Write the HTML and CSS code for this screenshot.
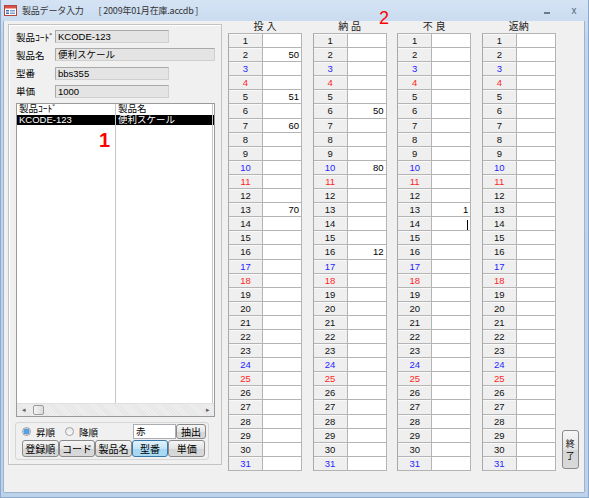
FILE: index.html
```html
<!DOCTYPE html>
<html lang="ja">
<head>
  <meta charset="UTF-8" />
  <title>製品データ入力</title>
  <link rel="stylesheet" href="styles.css">
</head>
<body>

  <div class="window">
    <!-- title bar -->
    <div class="titlebar">
      <svg class="app-icon" width="13" height="11" viewBox="0 0 13 11">
        <rect x="0.5" y="0.5" width="12" height="10" fill="#fff" stroke="#b4443c"/>
        <rect x="1" y="1" width="11" height="2.5" fill="#d9534a"/>
        <rect x="2" y="5" width="3" height="1.5" fill="#3d6fb8"/>
        <rect x="6" y="5" width="5" height="1.5" fill="#7aa0d4"/>
        <rect x="2" y="7.5" width="3" height="1.5" fill="#3d6fb8"/>
        <rect x="6" y="7.5" width="5" height="1.5" fill="#7aa0d4"/>
      </svg>
      <span class="title">製品データ入力</span>
      <span class="title file">[ 2009年01月在庫.accdb ]</span>
      <span class="win-btn min"></span>
      <span class="win-btn close">x</span>
    </div>

    <div class="client">
      <!-- left panel -->
      <div class="panel">
        <div class="field">
          <span class="field-label">製品ｺｰﾄﾞ</span>
          <div class="field-box">KCODE-123</div>
        </div>
        <div class="field">
          <span class="field-label">製品名</span>
          <div class="field-box wide">便利スケール</div>
        </div>
        <div class="field">
          <span class="field-label">型番</span>
          <div class="field-box">bbs355</div>
        </div>
        <div class="field">
          <span class="field-label">単価</span>
          <div class="field-box">1000</div>
        </div>

        <div class="listbox">
          <div class="list-cols">
            <div class="list-col c1">
              <div class="list-cell">製品ｺｰﾄﾞ</div>
              <div class="list-cell sel">KCODE-123</div>
            </div>
            <div class="list-col c2">
              <div class="list-cell">製品名</div>
              <div class="list-cell sel">便利スケール</div>
            </div>
            <div class="list-col c3">
              <div class="list-cell"></div>
              <div class="list-cell sel"></div>
            </div>
          </div>
          <div class="hscroll">
            <span class="arrow">◂</span>
            <span class="thumb"></span>
            <span class="arrow right">▸</span>
          </div>
          <span class="mark mark-1">1</span>
        </div>

        <div class="sort-box">
          <div class="sort-row">
            <span class="radio checked"></span><span class="radio-label">昇順</span>
            <span class="radio"></span><span class="radio-label">降順</span>
            <div class="filter-box">赤</div>
            <button class="btn filter-btn">抽出</button>
          </div>
          <div class="sort-buttons">
            <button class="btn">登録順</button>
            <button class="btn">コード</button>
            <button class="btn">製品名</button>
            <button class="btn pressed">型番</button>
            <button class="btn">単価</button>
          </div>
        </div>
      </div>

      <!-- daily sheets -->
      <div class="sheets">
        <div class="sheet">
          <div class="sheet-head">投&nbsp;入</div>
          <div class="grid" data-values="2:50,5:51,7:60,13:70"></div>
        </div>
        <div class="sheet">
          <div class="sheet-head">納&nbsp;品</div>
          <div class="grid" data-values="6:50,10:80,16:12"></div>
        </div>
        <div class="sheet">
          <div class="sheet-head">不&nbsp;良</div>
          <div class="grid" data-values="13:1,14:|"></div>
        </div>
        <div class="sheet">
          <div class="sheet-head">返納</div>
          <div class="grid" data-values=""></div>
        </div>
      </div>

      <button class="btn end-btn"><span>終</span><span>了</span></button>
    </div>

    <span class="mark mark-2">2</span>
  </div>

  <script>
    const blueDays = [3, 10, 17, 24, 31];
    const redDays = [4, 11, 18, 25];

    document.querySelectorAll('.grid').forEach(grid => {
      const values = {};
      grid.dataset.values.split(',').filter(Boolean).forEach(pair => {
        const [day, v] = pair.split(':');
        values[day] = v;
      });

      for (let d = 1; d <= 31; d++) {
        const row = document.createElement('div');
        row.className = 'row';

        const num = document.createElement('div');
        num.className = 'num';
        if (blueDays.includes(d)) num.classList.add('blue');
        if (redDays.includes(d)) num.classList.add('red');
        num.textContent = d;

        const val = document.createElement('div');
        val.className = 'val';
        if (values[d] === '|') {
          val.innerHTML = '<span class="caret"></span>';
        } else if (values[d]) {
          val.textContent = values[d];
        }

        row.appendChild(num);
        row.appendChild(val);
        grid.appendChild(row);
      }
    });
  </script>

</body>
</html>
```

FILE: styles.css
```css
body {
  margin: 0;
  background: #fff;
  font-family: "Liberation Sans", "Noto Sans CJK JP", sans-serif;
  font-size: 9.5px;
  color: #000;
}

.window {
  position: relative;
  width: 589px;
  height: 498px;
  box-sizing: border-box;
  display: flex;
  flex-direction: column;
  border: 1px solid #8ea9cb;
  border-top: none;
  background: linear-gradient(#d5e3f4, #c1d5ed 40px, #bcd1ea);
}

/* title bar */
.titlebar {
  height: 21px;
  flex: none;
  display: flex;
  align-items: center;
  padding-left: 3px;
}

.app-icon {
  flex: none;
  margin-right: 5px;
  margin-top: -1px;
}

.title {
  font-family: "Noto Sans CJK JP", sans-serif;
  font-size: 9px;
  color: #333;
  letter-spacing: -0.2px;
}

.title.file {
  margin-left: 15px;
}

.win-btn {
  width: 14px;
  text-align: center;
  font-size: 10px;
  color: #55657a;
}

.win-btn.min {
  margin-left: auto;
  height: 14px;
  display: flex;
  align-items: center;
  justify-content: center;
}

.win-btn.min::before {
  content: "";
  width: 6px;
  height: 2px;
  margin-top: 4px;
  background: #6a7a90;
}

.win-btn.close {
  margin-left: 13px;
  margin-right: 7px;
}

/* client area */
.client {
  flex: 1;
  margin: 0 4px 5px 3px;
  background: #f0f0f0;
  box-shadow: -1px 0 #9cb2cd, 1px 0 #9cb2cd, 0 1px #9cb2cd;
  display: flex;
  align-items: flex-start;
  padding: 3px 0 0 4px;
}

.panel {
  flex: none;
  width: 214px;
  height: 441px;
  box-sizing: border-box;
  border: 1px solid #c3c3c3;
  box-shadow: inset 1px 1px #fff;
  padding: 5px 0 0 7px;
}

.field {
  display: flex;
  align-items: center;
  height: 13px;
  margin-bottom: 5.3px;
}

.field-label {
  width: 39px;
  flex: none;
  font-family: "Noto Sans CJK JP", sans-serif;
}

.field-box {
  width: 114px;
  height: 13px;
  box-sizing: border-box;
  background: #e4e4e4;
  border: 1px solid #a9a9a9;
  border-right-color: #cfcfcf;
  border-bottom-color: #cfcfcf;
  padding-left: 2px;
  line-height: 11px;
}

.field-box.wide {
  width: 160px;
}

/* list */
.listbox {
  position: relative;
  width: 199px;
  height: 314px;
  box-sizing: border-box;
  margin-top: 5px;
  background: #fff;
  border: 1px solid #9a9a9a;
  display: flex;
  flex-direction: column;
}

.list-cols {
  flex: 1;
  display: flex;
}

.list-col {
  border-right: 1px solid #c6c6c6;
}

.list-col.c1 { width: 98px; }
.list-col.c2 { width: 96px; }
.list-col.c3 { width: 1px; border-right: none; }

.list-cell {
  height: 10.5px;
  line-height: 10px;
  padding-left: 2px;
  white-space: nowrap;
  overflow: hidden;
}

.list-cell.sel {
  background: #000;
  color: #fff;
}

.list-col.c3 .list-cell {
  padding-left: 0;
}

.hscroll {
  height: 12px;
  flex: none;
  display: flex;
  align-items: center;
  background: repeating-linear-gradient(45deg, #efefef 0 1px, #e6e6e6 1px 2px);
  border-top: 1px solid #e0e0e0;
  font-size: 7px;
  color: #606060;
}

.arrow {
  width: 13px;
  text-align: center;
}

.arrow.right {
  margin-left: auto;
}

.thumb {
  width: 11px;
  height: 10px;
  box-sizing: border-box;
  margin-left: 3px;
  border: 1px solid #9b9b9b;
  border-radius: 2px;
  background: linear-gradient(90deg, #f4f4f4, #dcdcdc);
}

/* sort box */
.sort-box {
  width: 194px;
  box-sizing: border-box;
  margin: 5px 0 0 -1px;
  border: 1px solid #d6d6d6;
  border-radius: 3px;
  padding: 1px 2px 2px 6px;
}

.sort-row {
  height: 15px;
  display: flex;
  align-items: center;
}

.radio {
  width: 9px;
  height: 9px;
  box-sizing: border-box;
  border: 1px solid #9ba0a6;
  border-radius: 50%;
  background: linear-gradient(#e8e8e8, #fafafa);
  margin-right: 5px;
}

.radio.checked {
  background: radial-gradient(circle, #4fa4e8 0 2.2px, #1f63b5 2.6px, #eaeaea 3.2px);
}

.radio-label {
  font-family: "Noto Sans CJK JP", sans-serif;
  margin-right: 10px;
}

.filter-box {
  margin-left: auto;
  width: 43px;
  height: 15px;
  box-sizing: border-box;
  background: #fff;
  border: 1px solid #abadb3;
  padding-left: 2px;
  line-height: 13px;
  font-family: "Noto Sans CJK JP", sans-serif;
}

.btn {
  font-family: "Noto Sans CJK JP", sans-serif;
  font-size: 10px;
  color: #000;
  padding: 0;
  margin: 0;
  border: 1px solid #8a8a8a;
  border-radius: 3px;
  background: linear-gradient(#f6f6f6, #e4e4e4 50%, #d5d5d5 51%, #d9d9d9);
  line-height: 12px;
  cursor: pointer;
}

.filter-btn {
  width: 30px;
  height: 15px;
}

.sort-buttons {
  margin-top: 1px;
  display: flex;
}

.sort-buttons .btn {
  width: 36.6px;
  height: 17px;
}

.btn.pressed {
  border-color: #3a78a8;
  background: linear-gradient(#e2f2fb, #c2e4f6 50%, #a6d6f1 51%, #a9d9f3);
}

/* sheets */
.sheets {
  display: flex;
  gap: 10.6px;
  margin: -3px 0 0 6px;
}

.sheet {
  width: 74px;
}

.sheet-head {
  height: 12px;
  line-height: 12px;
  text-align: center;
  font-size: 10px;
  color: #222;
}

.grid {
  border-left: 1px solid #a8a8a8;
  border-top: 1px solid #b4b4b4;
}

.row {
  display: flex;
  height: 14.1px;
}

.num,
.val {
  box-sizing: border-box;
  height: 14.1px;
  border-right: 1px solid #b4b4b4;
  border-bottom: 1px solid #b4b4b4;
  line-height: 13px;
}

.num {
  width: 34px;
  text-align: center;
  background: #efefef;
  box-shadow: inset 0 1px #f9f9f9;
  color: #111;
}

.num.blue { color: #1f1fff; }
.num.red { color: #ff1f1f; }

.val {
  width: 39px;
  background: #fff;
  text-align: right;
  padding-right: 2px;
}

.caret {
  display: inline-block;
  width: 1px;
  height: 10px;
  background: #000;
  vertical-align: middle;
}

.end-btn {
  align-self: flex-end;
  flex: none;
  width: 17px;
  height: 39px;
  margin: 0 0 23px 6px;
  display: flex;
  flex-direction: column;
  align-items: center;
  justify-content: center;
  font-size: 9px;
}

.end-btn span {
  display: block;
  height: 12px;
  line-height: 12px;
}

/* annotation numbers */
.mark {
  position: absolute;
  color: #f00;
  font-family: "Liberation Sans", sans-serif;
  line-height: 1;
}

.mark-1 {
  left: 82px;
  top: 26px;
  font-size: 20px;
  font-weight: bold;
}

.mark-2 {
  left: 378px;
  top: 9px;
  font-size: 18px;
}
```
